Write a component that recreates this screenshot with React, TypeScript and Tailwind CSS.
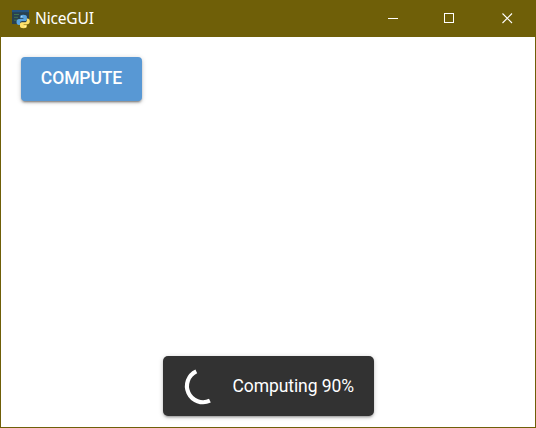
function AppIcon() {
  return (
    <svg width="20" height="20" viewBox="0 0 20 20" className="shrink-0">
      <rect x="1" y="1" width="17" height="14" fill="#29414f" />
      <rect x="1" y="1" width="17" height="2.2" fill="#245482" />
      <path d="M3 5.5h5M3 8.3h4M3 11.2h3" stroke="#41734d" strokeWidth="1" />
      <path
        d="M12.2 5.8c-2.5 0-3 .9-3 2v1.5h3.2v.6H8c-1.4 0-2.5 1-2.5 3s1 3 2.3 3H9v-1.8c0-1.2 1-2.1 2.2-2.1h3c1 0 1.7-.8 1.7-1.8V7.8c0-1.2-1.2-2-3.7-2z"
        fill="#5ba5de"
      />
      <path
        d="M12.6 19.2c2.5 0 3.2-.9 3.2-2v-1.4h-3.2v-.6h3.9c1.3 0 2.3-1 2.3-3 0-1.9-1-2.8-2.2-2.8h-.7v1.8c0 1.2-1 2.1-2.2 2.1h-3c-1 0-1.7.8-1.7 1.8v2.1c0 1.2 1.1 2 3.6 2z"
        fill="#ffe36b"
      />
      <circle cx="10.8" cy="7.7" r=".6" fill="#e5f3ff" />
      <circle cx="14.2" cy="17.3" r=".6" fill="#fffbe0" />
    </svg>
  );
}

function TitleBar() {
  return (
    <header className="flex h-[37px] shrink-0 items-center bg-[#6f5f08] pl-[11px] text-white">
      <AppIcon />
      <span className="ml-1 flex-1 pb-0.5 font-['Noto_Sans',sans-serif] text-[15.5px] leading-5 tracking-[-0.15px]">
        NiceGUI
      </span>
      <div className="flex items-center">
        <button aria-label="Minimize" className="flex h-[37px] w-14 items-center justify-center">
          <svg width="11" height="11" viewBox="0 0 11 11" shapeRendering="crispEdges">
            <path d="M0 5.5h10" stroke="white" />
          </svg>
        </button>
        <button aria-label="Maximize" className="flex h-[37px] w-[57px] items-center justify-center">
          <svg width="11" height="11" viewBox="0 0 11 11" shapeRendering="crispEdges">
            <rect x=".5" y=".5" width="9" height="9" fill="none" stroke="white" />
          </svg>
        </button>
        <button aria-label="Close" className="flex h-[37px] w-[58px] items-center justify-center">
          <svg width="11" height="11" viewBox="0 0 11 11">
            <path d="M.5.5l9.5 9.5M10 .5L.5 10" stroke="white" strokeWidth="1.1" />
          </svg>
        </button>
      </div>
    </header>
  );
}

export default function App() {
  return (
    <div className="flex h-[428px] w-[536px] flex-col overflow-hidden bg-[#6f5f08] font-[Roboto,sans-serif]">
      <TitleBar />
      <main className="mx-px mb-px flex flex-1 flex-col items-start justify-between bg-white pt-5 pb-[11px]">
        <button className="ml-5 flex h-11 w-[121px] items-center justify-center rounded-[4px] bg-[#5898d4] pb-0.5 text-[17.5px] leading-[30px] font-medium tracking-[-0.1px] text-white shadow-[0_1px_5px_rgba(0,0,0,0.2),0_2px_2px_rgba(0,0,0,0.2),0_3px_1px_-2px_rgba(0,0,0,0.2)]">
          COMPUTE
        </button>
        <div className="ml-[162px] flex h-[60px] w-[211px] items-center rounded-[5px] bg-[#323232] pl-5 text-[17.5px] tracking-[-0.08px] text-white shadow-[0_1px_5px_rgba(0,0,0,0.2),0_2px_2px_rgba(0,0,0,0.14),0_3px_1px_-2px_rgba(0,0,0,0.12)]">
          <svg width="40" height="40" viewBox="0 0 40 40" className="shrink-0">
            <path d="M13.3 5.4A15.7 15.7 0 0 0 26.9 34.7" fill="none" stroke="white" strokeWidth="4.2" />
          </svg>
          <span className="ml-[9.5px] whitespace-nowrap">Computing 90%</span>
        </div>
      </main>
    </div>
  );
}
